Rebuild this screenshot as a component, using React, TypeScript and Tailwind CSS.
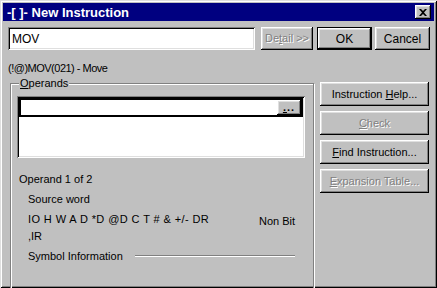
import React from 'react';

const raised =
  'bg-[#c0c0c0] shadow-[inset_-1px_-1px_#000,inset_1px_1px_#fff,inset_-2px_-2px_#808080,inset_2px_2px_#dfdfdf]';
const sunken =
  'bg-white shadow-[inset_1px_1px_#808080,inset_-1px_-1px_#fff,inset_2px_2px_#000,inset_-2px_-2px_#dfdfdf]';
const disabled = 'text-[#808080] [text-shadow:1px_1px_0_#fff]';

const Btn = ({ children, off, className = '' }: { children: React.ReactNode; off?: boolean; className?: string }) => (
  <div className={`${raised} flex items-center justify-center ${off ? disabled : 'text-black'} ${className}`}>
    <span className="whitespace-pre">{children}</span>
  </div>
);

export default function App() {
  return (
    <div
      className="w-[437px] h-[288px] overflow-hidden bg-[#c0c0c0] p-[3px] text-[11px] text-black shadow-[inset_1px_1px_#dfdfdf,inset_-1px_-1px_#000,inset_2px_2px_#fff,inset_-2px_-2px_#808080]"
      style={{ fontFamily: '"Liberation Sans", Arial, sans-serif' }}
    >
      {/* Title bar */}
      <div className="h-[18px] bg-[#000080] flex items-center justify-between pl-[4px] pr-[3px]">
        <span className="text-white font-bold text-[13px] leading-none whitespace-pre">-[ ]- New Instruction</span>
        <div className={`${raised} w-[16px] h-[14px] flex items-center justify-center`}>
          <svg width="8" height="7" viewBox="0 0 8 7">
            <path d="M0 0h2l2 2 2-2h2L5 3.5 8 7H6L4 5 2 7H0l3-3.5z" fill="#000" />
          </svg>
        </div>
      </div>

      {/* Top row */}
      <div className="flex items-center mt-[6px] h-[23px]">
        <div className={`${sunken} ml-[5px] w-[247px] h-[23px] flex items-center pl-[4px] text-[12px]`}>MOV</div>
        <Btn off className="ml-[6px] w-[52px] h-[23px]">
          De<span className="underline">t</span>ail &gt;&gt;
        </Btn>
        <div className="ml-[4px] w-[55px] h-[23px] border border-black flex">
          <Btn className="flex-1 text-[12px]">OK</Btn>
        </div>
        <Btn className="ml-[3px] w-[55px] h-[23px] text-[12px]">Cancel</Btn>
      </div>

      <div className="mt-[11px] ml-[5px] h-[14px] leading-[14px] tracking-[-0.5px]">(!@)MOV(021) - Move</div>

      {/* Body */}
      <div className="flex mt-[7px]">
        <div className="relative ml-[7px] mt-[1px] w-[304px] h-[220px] border border-[#808080] shadow-[1px_1px_0_#fff,inset_1px_1px_0_#fff]">
          <span className="absolute left-[8px] top-[-8px] px-[1px] bg-[#c0c0c0] leading-[14px]">
            <span className="underline">O</span>perands
          </span>

          <div className={`${sunken} mt-[12px] ml-[6px] w-[288px] h-[62px] p-[2px]`}>
            <div className="h-[19px] border-2 border-black flex bg-white">
              <div className="flex-1" />
              <div className={`${raised} w-[24px] flex items-end justify-center pb-[2px] font-bold leading-none`}>
                <span className="tracking-[1px]">
                  <span className="underline">.</span>..
                </span>
              </div>
            </div>
          </div>

          <div className="mt-[14px] ml-[8px] h-[14px] leading-[14px]">Operand 1 of 2</div>
          <div className="mt-[6px] ml-[17px] h-[14px] leading-[14px]">Source word</div>
          <div className="mt-[6px] ml-[17px] h-[14px] leading-[14px] flex">
            <span className="w-[231px] tracking-[0.4px] whitespace-pre">IO H W A D *D @D C T # &amp; +/- DR</span>
            <span className="mt-[2px]">Non Bit</span>
          </div>
          <div className="mt-[3px] ml-[17px] h-[14px] leading-[14px]">,IR</div>
          <div className="mt-[6px] ml-[17px] h-[14px] flex items-center">
            <span className="w-[107px]">Symbol Information</span>
            <div className="w-[160px] h-[2px] border-t border-[#808080] border-b border-b-white" />
          </div>
        </div>

        <div className="ml-[6px] w-[109px] flex flex-col gap-[5px]">
          <Btn className="h-[24px]">
            Instruction <span className="underline">H</span>elp...
          </Btn>
          <Btn off className="h-[24px]">
            <span className="underline">C</span>heck
          </Btn>
          <Btn className="h-[24px]">
            <span className="underline">F</span>ind Instruction...
          </Btn>
          <Btn off className="h-[24px]">
            <span className="underline">E</span>xpansion Table...
          </Btn>
        </div>
      </div>
    </div>
  );
}
